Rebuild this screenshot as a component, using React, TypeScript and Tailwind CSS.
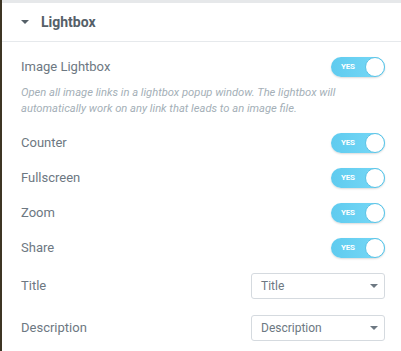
import React from 'react';

const switches = ['Counter', 'Fullscreen', 'Zoom', 'Share'];

const Toggle: React.FC = () => (
  <div className="relative w-[54px] h-[20px] rounded-full bg-gradient-to-r from-[#5fcbef] to-[#78d9f7] shadow-[0_1px_2px_rgba(0,0,0,0.15)]">
    <span className="absolute left-[10px] top-[5px] text-[8px] leading-[10px] font-bold text-white tracking-tight">
      YES
    </span>
    <span className="absolute right-0 top-0 w-[20px] h-[20px] rounded-full bg-white border border-[#5bc3e6]" />
  </div>
);

const Select: React.FC<{ value: string }> = ({ value }) => (
  <div className="w-[134px] h-[26px] flex items-center justify-between border border-[#d5dadf] rounded-[3px] pl-[9px] pr-[6px] text-[12px] text-[#6d7882]">
    <span>{value}</span>
    <span className="w-0 h-0 border-l-[4px] border-r-[4px] border-t-[4px] border-l-transparent border-r-transparent border-t-[#6d7882]" />
  </div>
);

const App: React.FC = () => {
  return (
    <div
      className="w-[401px] h-[351px] bg-white border-l-2 border-[#3d3524] overflow-hidden"
      style={{ fontFamily: "Roboto, 'Liberation Sans', sans-serif" }}
    >
      <div className="h-[3px] bg-[#e6e8ea]" />
      {/* Section header */}
      <div className="h-[39px] flex items-center border-b border-[#e6e9ec] pl-[19px]">
        <span className="w-0 h-0 border-l-[4px] border-r-[4px] border-t-[4px] border-l-transparent border-r-transparent border-t-[#556068]" />
        <span className="ml-[12px] text-[14px] font-bold text-[#556068]">Lightbox</span>
      </div>

      <div className="pl-[19px] pr-[16px] text-[13px] text-[#6d7882]">
        {/* Image Lightbox */}
        <div className="pt-[15px] flex items-center justify-between">
          <span>Image Lightbox</span>
          <Toggle />
        </div>
        <p className="mt-[8px] text-[11.2px] leading-[16px] italic text-[#a4afb7]">
          Open all image links in a lightbox popup window. The lightbox will automatically work on any link that leads to an image file.
        </p>

        <div className="mt-[16px] flex flex-col gap-[15px]">
          {switches.map((s) => (
            <div key={s} className="flex items-center justify-between">
              <span>{s}</span>
              <Toggle />
            </div>
          ))}
        </div>

        <div className="mt-[15px] flex items-center justify-between">
          <span>Title</span>
          <Select value="Title" />
        </div>
        <div className="mt-[16px] flex items-center justify-between">
          <span>Description</span>
          <Select value="Description" />
        </div>
      </div>
    </div>
  );
};

export default App;
